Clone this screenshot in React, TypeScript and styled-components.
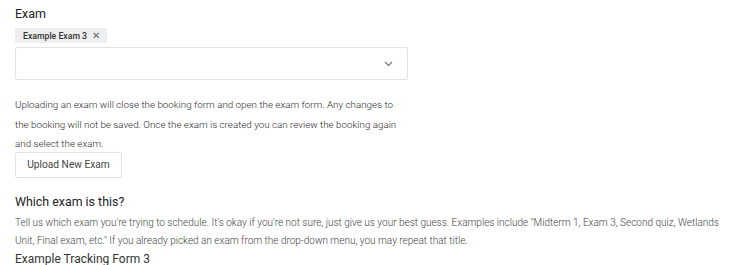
import styled, { createGlobalStyle } from "styled-components";

const GlobalStyle = createGlobalStyle`
  body {
    margin: 0;
    background: #fff;
    font-family: Roboto, "Liberation Sans", sans-serif;
    color: #333;
  }
`;

const Page = styled.div`
  padding: 6px 15px 0 15px;
  width: 720px;
`;

const Label = styled.div`
  font-size: 12.5px;
  line-height: 16px;
  color: #222;
`;

const ChipRow = styled.div`
  display: flex;
  margin-top: 6px;
`;

const Chip = styled.span`
  display: inline-flex;
  align-items: center;
  gap: 5px;
  height: 15px;
  padding: 0 7px 0 8px;
  background: #eeeeee;
  font-size: 8.7px;
  font-weight: 500;
  color: #333;
`;

const ChipClose = styled.span`
  font-size: 10px;
  color: #666;
  font-weight: 300;
`;

const Select = styled.div`
  box-sizing: border-box;
  width: 393px;
  height: 33px;
  margin-top: 4px;
  border: 1px solid #e2e2e2;
  border-radius: 2px;
  display: flex;
  align-items: center;
  justify-content: flex-end;
  padding-right: 14px;
`;

const Help = styled.p`
  margin: 15px 0 -2px 0;
  width: 392px;
  font-size: 9.8px;
  font-weight: 300;
  line-height: 19.5px;
  color: #2a2a2a;
`;

const Button = styled.button`
  display: block;
  height: 26px;
  width: 107px;
  border: 1px solid #e2e2e2;
  border-radius: 2px;
  background: #fff;
  font-family: inherit;
  font-size: 10.2px;
  color: #444;
  padding: 0;
`;

const Question = styled.div`
  margin-top: 16px;
  font-size: 12.4px;
  line-height: 16px;
  color: #222;
`;

const Description = styled.p`
  margin: 4px 0 0 0;
  font-size: 10px;
  font-weight: 300;
  line-height: 18px;
  color: #444;
`;

const Answer = styled.div`
  margin-top: 1px;
  font-size: 12px;
  line-height: 16px;
  color: #333;
`;

const Chevron = () => (
  <svg width="9" height="6" viewBox="0 0 9 6" fill="none">
    <path d="M1 1l3.5 3.5L8 1" stroke="#777" strokeWidth="1.1" />
  </svg>
);

export default function App() {
  return (
    <>
      <GlobalStyle />
      <Page>
        <Label>Exam</Label>
        <ChipRow>
          <Chip>
            Example Exam 3 <ChipClose>✕</ChipClose>
          </Chip>
        </ChipRow>
        <Select>
          <Chevron />
        </Select>
        <Help>
          Uploading an exam will close the booking form and open the exam form. Any changes to
          the booking will not be saved. Once the exam is created you can review the booking again
          and select the exam.
        </Help>
        <Button>Upload New Exam</Button>
        <Question>Which exam is this?</Question>
        <Description>
          Tell us which exam you're trying to schedule. It's okay if you're not sure, just give us
          your best guess. Examples include "Midterm 1, Exam 3, Second quiz, Wetlands Unit, Final
          exam, etc." If you already picked an exam from the drop-down menu, you may repeat that
          title.
        </Description>
        <Answer>Example Tracking Form 3</Answer>
      </Page>
    </>
  );
}
